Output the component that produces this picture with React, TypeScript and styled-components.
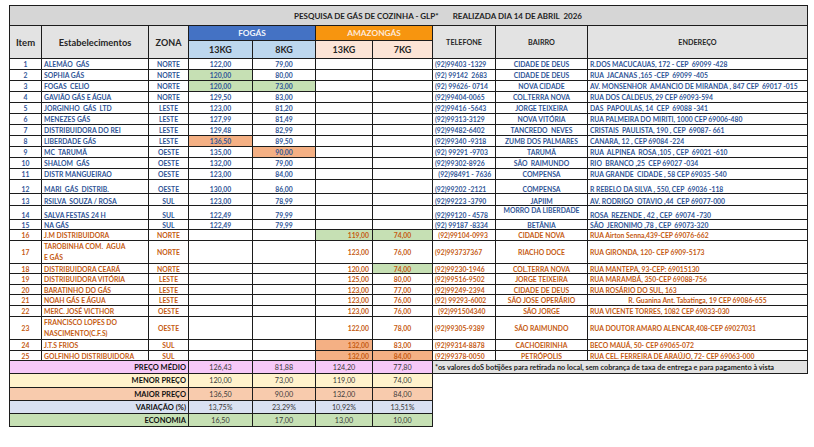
import styled, { createGlobalStyle, css } from 'styled-components';

const BLUE = '#2f5597';
const ORANGE = '#c55a11';
const GREEN_FILL = '#c6e0b4';
const ORANGE_FILL = '#f4b084';

const GlobalStyle = createGlobalStyle`
  body {
    margin: 0;
    background: #fff;
    font-family: Lato, "Open Sans", sans-serif;
  }
`;

const Page = styled.div`
  padding: 5px 0 0 9px;
`;

const Sheet = styled.table`
  border-collapse: collapse;
  table-layout: fixed;
  width: 798px;
`;

const lined = css`
  border: 1px solid #1c1c1c;
  padding: 0;
  overflow: hidden;
  white-space: nowrap;
`;

const TitleCell = styled.th`
  ${lined};
  height: 19px;
  background: #d6d6d6;
  color: #1f1f1f;
  font-size: 8px;
  font-weight: 700;
  text-align: left;
  padding-left: 284px;
  white-space: pre;
`;

const TitleGap = styled.span`
  display: inline-block;
  width: 14px;
`;

const HeadCell = styled.th<{ $bg?: string; $color?: string; $size?: number }>`
  ${lined};
  background: ${(p) => p.$bg ?? '#e3e3e3'};
  color: ${(p) => p.$color ?? '#262626'};
  font-size: ${(p) => p.$size ?? 7.2}px;
  font-weight: 700;
  text-align: center;
  vertical-align: middle;
`;

const Row = styled.tr<{ $h: number }>`
  height: ${(p) => p.$h}px;
`;

type Align = 'left' | 'center' | 'right';
type VAlign = 'middle' | 'bottom' | 'top';

const Cell = styled.td<{
  $align?: Align;
  $valign?: VAlign;
  $color: string;
  $fill?: string;
  $wrap?: boolean;
}>`
  ${lined};
  background: ${(p) => p.$fill ?? '#fff'};
  color: ${(p) => p.$color};
  font-size: 6.8px;
  font-weight: 700;
  line-height: ${(p) => (p.$wrap ? '11px' : '8px')};
  text-align: ${(p) => p.$align ?? 'center'};
  vertical-align: ${(p) => p.$valign ?? 'middle'};
  padding: ${(p) => (p.$align === 'left' ? '0 0 0 2px' : p.$align === 'right' ? '0 3px 0 0' : '0')};
  white-space: pre;
`;

const SummaryLabel = styled.td<{ $fill: string }>`
  ${lined};
  background: ${(p) => p.$fill};
  color: #111;
  font-size: 7.5px;
  font-weight: 700;
  text-align: right;
  padding-right: 2px;
`;

const SummaryValue = styled.td<{ $fill: string }>`
  ${lined};
  background: ${(p) => p.$fill};
  color: #3a3a3a;
  font-size: 7.2px;
  text-align: center;
`;

const NoteCell = styled.td`
  ${lined};
  background: #e2e2e2;
  color: #1f1f1f;
  font-size: 7.3px;
  font-weight: 700;
  text-align: left;
  padding-left: 2px;
`;

type Mark = 'green' | 'orange';

interface Shop {
  n: number;
  name: string;
  zone: string;
  brand: 'fogas' | 'amazon';
  p13: string;
  p8: string;
  phone: string;
  hood: string;
  address: string;
  h: number;
  m13?: Mark;
  m8?: Mark;
  valign?: VAlign;
  hoodTop?: boolean;
  centerAddress?: boolean;
}

const shops: Shop[] = [
  { n: 1, name: 'ALEMÃO  GÁS', zone: 'NORTE', brand: 'fogas', p13: '122,00', p8: '79,00', phone: '(92)99403 -1329', hood: 'CIDADE DE DEUS', address: 'R.DOS MACUCAUAS, 172 - CEP  69099 -428', h: 11 },
  { n: 2, name: 'SOPHIA GÁS', zone: 'NORTE', brand: 'fogas', p13: '120,00', p8: '80,00', phone: '(92) 99142  2683', hood: 'CIDADE DE DEUS', address: 'RUA  JACANAS ,165 -CEP  69099 -405', h: 11, m13: 'green' },
  { n: 3, name: 'FOGAS  CELIO', zone: 'NORTE', brand: 'fogas', p13: '120,00', p8: '73,00', phone: '(92) 99626- 0714', hood: 'NOVA CIDADE', address: 'AV. MONSENHOR  AMANCIO DE MIRANDA , 847 CEP  69017 -015', h: 11, m13: 'green', m8: 'green' },
  { n: 4, name: 'GAVIÃO GÁS E ÁGUA', zone: 'NORTE', brand: 'fogas', p13: '129,50', p8: '83,00', phone: '(92)99404-0065', hood: 'COL.TERRA NOVA', address: 'RUA DOS CALDEUS, 29 CEP 69093-594', h: 11 },
  { n: 5, name: 'JORGINHO  GÁS  LTD', zone: 'LESTE', brand: 'fogas', p13: '123,00', p8: '81,20', phone: '(92)99416 -5643', hood: 'JORGE TEIXEIRA', address: 'DAS  PAPOULAS, 14  CEP  69088 -341', h: 11 },
  { n: 6, name: 'MENEZES GÁS', zone: 'LESTE', brand: 'fogas', p13: '127,99', p8: '81,49', phone: '(92)99313-3129', hood: 'NOVA VITÓRIA', address: 'RUA PALMEIRA DO MIRITI, 1000 CEP 69006-480', h: 11 },
  { n: 7, name: 'DISTRIBUIDORA DO REI', zone: 'LESTE', brand: 'fogas', p13: '129,48', p8: '82,99', phone: '(92)99482-6402', hood: 'TANCREDO  NEVES', address: 'CRISTAIS  PAULISTA, 190 , CEP  69087- 661', h: 11 },
  { n: 8, name: 'LIBERDADE GÁS', zone: 'LESTE', brand: 'fogas', p13: '136,50', p8: '89,50', phone: '(92)99340 -9318', hood: 'ZUMB DOS PALMARES', address: 'CANARA, 12 , CEP 69084 -224', h: 11, m13: 'orange' },
  { n: 9, name: 'MC  TARUMÃ', zone: 'OESTE', brand: 'fogas', p13: '135,00', p8: '90,00', phone: '(92) 99291 -9703', hood: 'TARUMÃ', address: 'RUA  ALPINEA  ROSA ,105 , CEP  69021 -610', h: 11, m8: 'orange' },
  { n: 10, name: 'SHALOM  GÁS', zone: 'OESTE', brand: 'fogas', p13: '132,00', p8: '79,00', phone: '(92)99302-8926', hood: 'SÃO  RAIMUNDO', address: 'RIO  BRANCO ,25  CEP 69027 -034', h: 11 },
  { n: 11, name: 'DISTR MANGUEIRAO', zone: 'OESTE', brand: 'fogas', p13: '123,00', p8: '84,00', phone: '  (92)98491 - 7636', hood: 'COMPENSA', address: 'RUA GRANDE  CIDADE , 58 CEP 69035 -540', h: 11 },
  { n: 12, name: 'MARI  GÁS  DISTRIB.', zone: 'OESTE', brand: 'fogas', p13: '130,00', p8: '86,00', phone: '(92)99202 -2121', hood: 'COMPENSA', address: 'R REBELO DA SILVA , 550, CEP  69036 -118', h: 14, valign: 'bottom' },
  { n: 13, name: 'RSILVA  SOUZA / ROSA', zone: 'SUL', brand: 'fogas', p13: '123,00', p8: '78,99', phone: '(92)99223 -3790', hood: 'JAPIIM', address: 'AV. RODRIGO  OTAVIO ,44  CEP 69077-000', h: 12, valign: 'bottom' },
  { n: 14, name: 'SALVA FESTAS 24 H', zone: 'SUL', brand: 'fogas', p13: '122,49', p8: '79,99', phone: '(92)99120 - 4578', hood: 'MORRO DA LIBERDADE', address: 'ROSA  REZENDE , 42 , CEP  69074 -730', h: 14, valign: 'bottom', hoodTop: true },
  { n: 15, name: 'NA GÁS', zone: 'SUL', brand: 'fogas', p13: '122,49', p8: '79,99', phone: '(92) 99187 -8334', hood: 'BETÂNIA', address: 'SÃO  JERONIMO ,78 , CEP  69073-320', h: 10, valign: 'bottom' },
  { n: 16, name: 'J.M DISTRIBUIDORA', zone: 'NORTE', brand: 'amazon', p13: '119,00', p8: '74,00', phone: '  (92)99104-0993', hood: 'CIDADE NOVA', address: 'RUA Airton Senna,439-CEP 69076-662', h: 11, m13: 'green', m8: 'green' },
  { n: 17, name: 'TAROBINHA COM.  AGUA\nE GÁS', zone: 'NORTE', brand: 'amazon', p13: '123,00', p8: '76,00', phone: '(92)993737367', hood: 'RIACHO DOCE', address: 'RUA GIRONDA, 120- CEP 6909-5173', h: 22 },
  { n: 18, name: 'DISTRIBUIDORA CEARÁ', zone: 'NORTE', brand: 'amazon', p13: '120,00', p8: '74,00', phone: '(92)99230-1946', hood: 'COL.TERRA NOVA', address: 'RUA MANTEPA, 93-CEP: 69015130', h: 10, m8: 'green' },
  { n: 19, name: 'DISTRIBUIDORA VITÓRIA', zone: 'LESTE', brand: 'amazon', p13: '125,00', p8: '80,00', phone: '(92)99516-9502', hood: 'JORGE TEIXEIRA', address: 'RUA MARAMBÁ, 350-CEP 69088-756', h: 11 },
  { n: 20, name: 'BARATINHO DO GÁS', zone: 'LESTE', brand: 'amazon', p13: '123,00', p8: '77,00', phone: '(92)99249-2394', hood: 'CIDADE DE DEUS', address: 'RUA ROSÁRIO DO SUL, 163', h: 10 },
  { n: 21, name: 'NOAH GÁS E ÁGUA', zone: 'LESTE', brand: 'amazon', p13: '123,00', p8: '76,00', phone: '(92) 99293-6002', hood: 'SÃO JOSE OPERÁRIO', address: 'R. Guanina Ant. Tabatinga, 19 CEP 69086-655', h: 11, centerAddress: true },
  { n: 22, name: 'MERC. JOSÉ VICTHOR', zone: 'OESTE', brand: 'amazon', p13: '123,00', p8: '76,00', phone: '  (92)991504340', hood: 'SÃO JORGE', address: 'RUA VICENTE TORRES, 1082 CEP 69033-030', h: 11 },
  { n: 23, name: 'FRANCISCO LOPES DO\nNASCIMENTO(C.F.S)', zone: 'OESTE', brand: 'amazon', p13: '122,00', p8: '78,00', phone: '(92)99305-9389', hood: 'SÃO RAIMUNDO', address: 'RUA DOUTOR AMARO ALENCAR,408-CEP 69027031', h: 22 },
  { n: 24, name: 'J.T.S FRIOS', zone: 'SUL', brand: 'amazon', p13: '132,00', p8: '83,00', phone: '(92)99314-8878', hood: 'CACHOEIRINHA', address: 'BECO MAUÁ, 50- CEP 69065-072', h: 11, m13: 'orange' },
  { n: 25, name: 'GOLFINHO DISTRIBUIDORA', zone: 'SUL', brand: 'amazon', p13: '132,00', p8: '84,00', phone: '(92)99378-0050', hood: 'PETRÓPOLIS', address: 'RUA CEL. FERREIRA DE ARAÚJO, 72- CEP 69063-000', h: 10, m13: 'orange', m8: 'orange' },
];

const summary = [
  { label: 'PREÇO MÉDIO', fill: '#f6c8f8', h: 13, values: ['126,43', '81,88', '124,20', '77,80'] },
  { label: 'MENOR PREÇO', fill: '#fff2cc', h: 14, values: ['120,00', '73,00', '119,00', '74,00'] },
  { label: 'MAIOR PREÇO', fill: '#f8cbad', h: 13, values: ['136,50', '90,00', '132,00', '84,00'] },
  { label: 'VARIAÇÃO (%)', fill: '#d9e1f2', h: 13, values: ['13,75%', '23,29%', '10,92%', '13,51%'] },
  { label: 'ECONOMIA', fill: '#c6e0b4', h: 13, values: ['16,50', '17,00', '13,00', '10,00'] },
];

const widths = [32, 107, 40, 64, 63, 57, 60, 63, 92, 220];

const fillOf = (m?: Mark) => (m === 'green' ? GREEN_FILL : m === 'orange' ? ORANGE_FILL : undefined);

const ShopRow = ({ s }: { s: Shop }) => {
  const color = s.brand === 'fogas' ? BLUE : ORANGE;
  const v = s.valign;
  const wrap = s.name.includes('\n');
  const fogas = s.brand === 'fogas';
  return (
    <Row $h={s.h}>
      <Cell $color={color} $valign={v}>{s.n}</Cell>
      <Cell $color={color} $valign={v} $align="left" $wrap={wrap}>{s.name}</Cell>
      <Cell $color={color} $valign={v}>{s.zone}</Cell>
      <Cell $color={color} $valign={v} $fill={fogas ? fillOf(s.m13) : undefined}>{fogas ? s.p13 : ''}</Cell>
      <Cell $color={color} $valign={v} $fill={fogas ? fillOf(s.m8) : undefined}>{fogas ? s.p8 : ''}</Cell>
      <Cell $color={color} $valign={v} $align="right" $fill={!fogas ? fillOf(s.m13) : undefined}>{!fogas ? s.p13 : ''}</Cell>
      <Cell $color={color} $valign={v} $fill={!fogas ? fillOf(s.m8) : undefined}>{!fogas ? s.p8 : ''}</Cell>
      <Cell $color={color} $valign={v} $align="left">{s.phone}</Cell>
      <Cell $color={color} $valign={s.hoodTop ? 'top' : v}>{s.hood}</Cell>
      <Cell $color={color} $valign={v} $align={s.centerAddress ? 'center' : 'left'}>{s.address}</Cell>
    </Row>
  );
};

export default function App() {
  return (
    <Page>
      <GlobalStyle />
      <Sheet>
        <colgroup>
          {widths.map((w, i) => (
            <col key={i} style={{ width: w }} />
          ))}
        </colgroup>
        <thead>
          <tr>
            <TitleCell colSpan={10}>
              PESQUISA DE GÁS DE COZINHA - GLP*<TitleGap />REALIZADA DIA 14 DE ABRIL  2026
            </TitleCell>
          </tr>
          <Row $h={15}>
            <HeadCell rowSpan={2} $size={9.5}>Item</HeadCell>
            <HeadCell rowSpan={2} $size={9.3}>Estabelecimentos</HeadCell>
            <HeadCell rowSpan={2} $size={9}>ZONA</HeadCell>
            <HeadCell colSpan={2} $bg="#4472c4" $color="#f2f5fb" $size={8.3}>FOGÁS</HeadCell>
            <HeadCell colSpan={2} $bg="#f7950f" $color="#fde9d9" $size={8.3}>AMAZONGÁS</HeadCell>
            <HeadCell rowSpan={2}>TELEFONE</HeadCell>
            <HeadCell rowSpan={2}>BAIRRO</HeadCell>
            <HeadCell rowSpan={2}>ENDEREÇO</HeadCell>
          </Row>
          <Row $h={18}>
            <HeadCell $bg="#bdd7ee" $size={9}>13KG</HeadCell>
            <HeadCell $bg="#bdd7ee" $size={9}>8KG</HeadCell>
            <HeadCell $bg="#fce4d6" $size={9}>13KG</HeadCell>
            <HeadCell $bg="#fce4d6" $size={9}>7KG</HeadCell>
          </Row>
        </thead>
        <tbody>
          {shops.map((s) => (
            <ShopRow key={s.n} s={s} />
          ))}
          {summary.map((r, i) => (
            <Row key={r.label} $h={r.h}>
              <SummaryLabel colSpan={3} $fill={r.fill}>{r.label}</SummaryLabel>
              {r.values.map((val, j) => (
                <SummaryValue key={j} $fill={r.fill}>{val}</SummaryValue>
              ))}
              {i === 0 && (
                <NoteCell colSpan={3}>
                  *os valores doS botijões para retirada no local, sem cobrança de taxa de entrega e para pagamento à vista
                </NoteCell>
              )}
            </Row>
          ))}
        </tbody>
      </Sheet>
    </Page>
  );
}
